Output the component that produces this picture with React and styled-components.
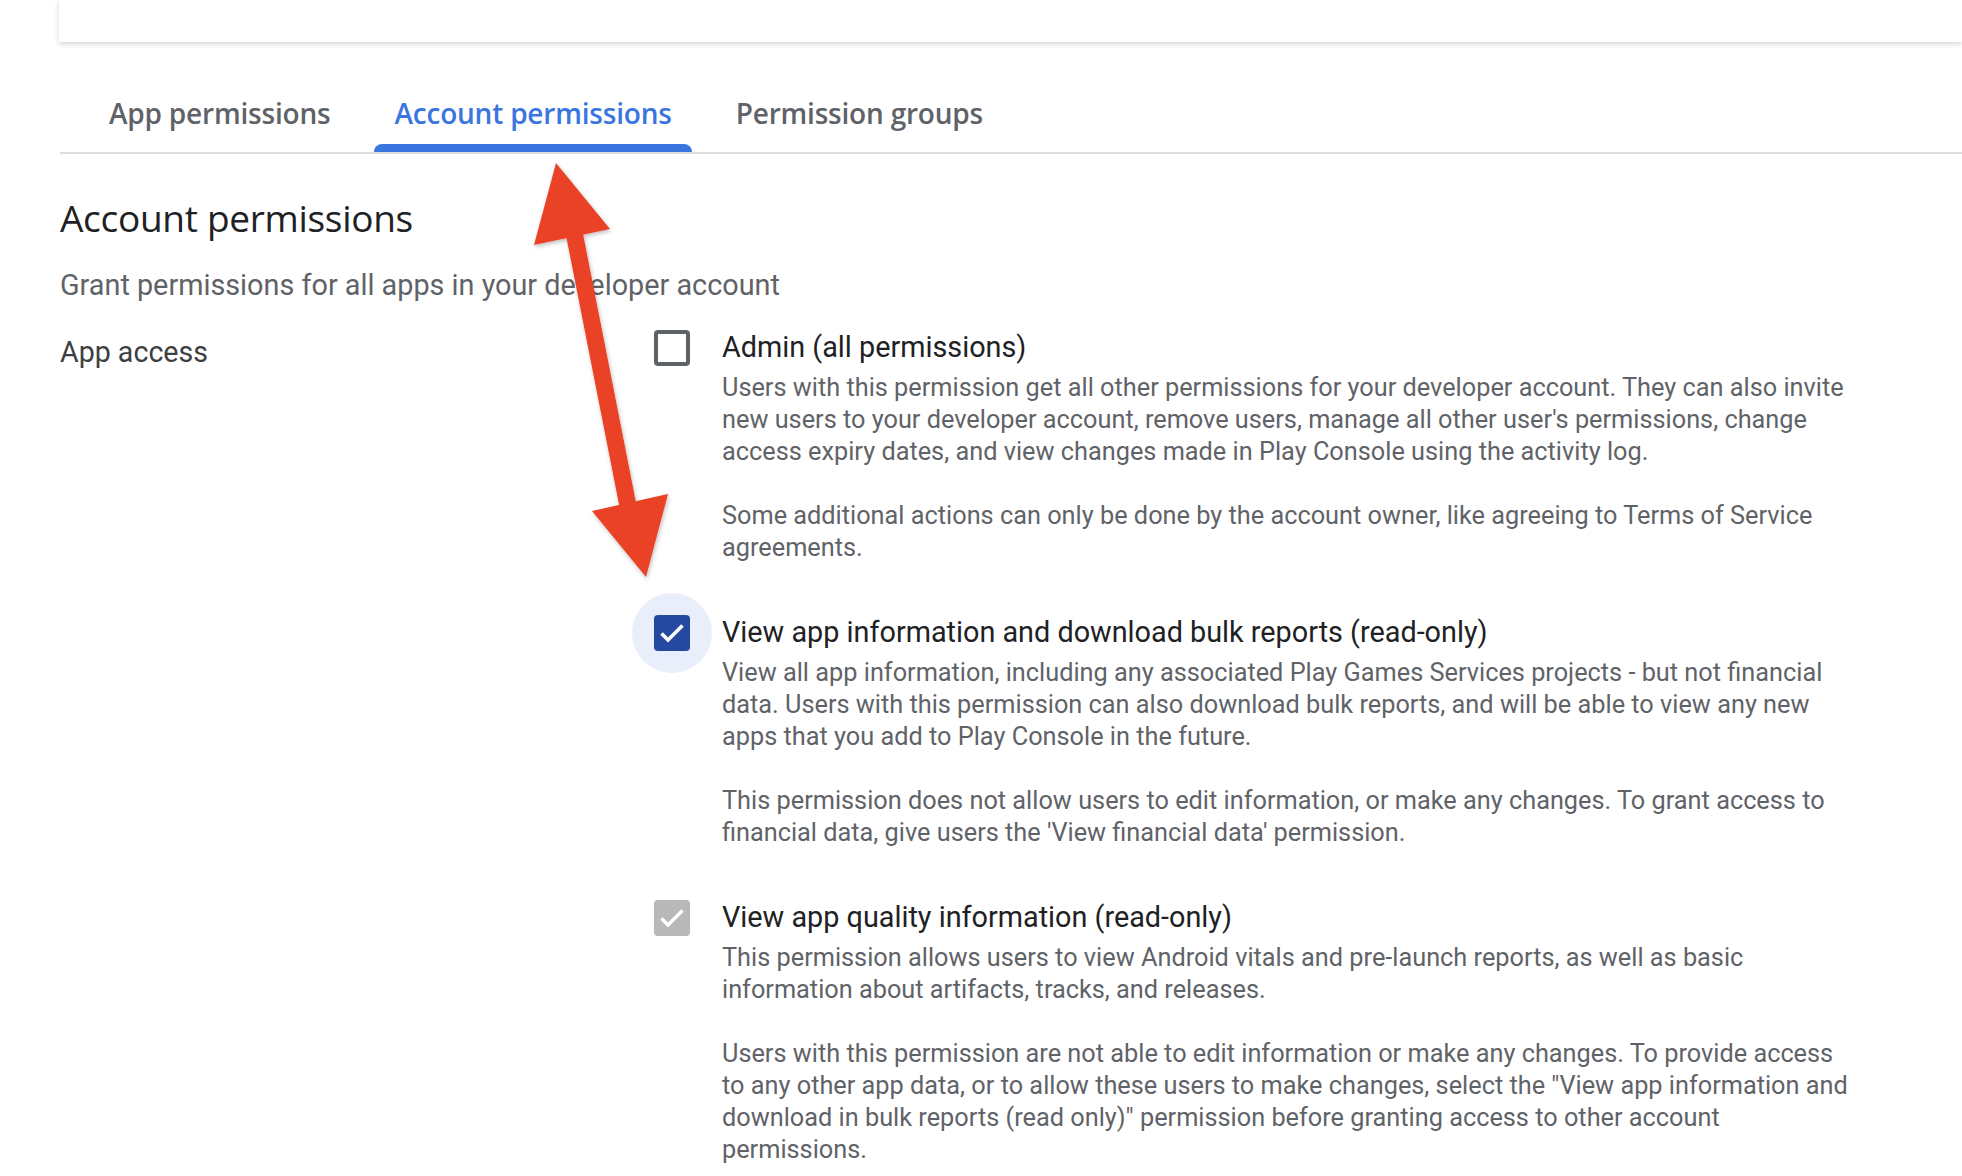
import styled, { createGlobalStyle } from 'styled-components';

const GlobalStyle = createGlobalStyle`
    html, body {
        margin: 0;
        padding: 0;
        background: #fff;
        overflow: hidden;
    }
    body {
        font-family: Roboto, 'Noto Sans', sans-serif;
        -webkit-font-smoothing: antialiased;
    }
`;

const Page = styled.div`
    position: relative;
    width: 1962px;
    height: 1176px;
    overflow: hidden;
`;

const TopBar = styled.div`
    height: 42px;
    margin-left: 59px;
    background: #fff;
    box-shadow: 0 2px 5px rgba(60, 64, 67, 0.22);
`;

const Main = styled.main`
    padding-left: 60px;
`;

const TabBar = styled.nav`
    display: flex;
    gap: 24px;
    margin-top: 40px;
    padding-left: 29px;
    border-bottom: 2px solid #dadce0;
`;

const Tab = styled.div`
    position: relative;
    height: 70px;
    padding: 0 20px 8px;
    box-sizing: border-box;
    display: flex;
    align-items: center;
    font-family: 'Open Sans', Lato, sans-serif;
    font-size: 28px;
    font-weight: 600;
    letter-spacing: -0.2px;
    color: ${p => (p.$active ? '#3a75e0' : '#5f6368')};

    &::after {
        content: '';
        display: ${p => (p.$active ? 'block' : 'none')};
        position: absolute;
        left: 0;
        right: 0;
        bottom: 0;
        height: 8px;
        border-radius: 8px 8px 0 0;
        background: #3a75e0;
    }
`;

const Heading = styled.h1`
    margin: 40px 0 0;
    font-family: 'Open Sans', Lato, sans-serif;
    font-size: 37px;
    line-height: 48px;
    font-weight: 500;
    letter-spacing: -0.3px;
    color: #202124;
`;

const Subtitle = styled.p`
    margin: 25px 0 0;
    font-size: 28.8px;
    line-height: 36px;
    color: #5f6368;
`;

const AccessRow = styled.section`
    display: grid;
    grid-template-columns: 594px 1202px;
    margin-top: 22px;
`;

const RowLabel = styled.div`
    padding-top: 5px;
    font-size: 28.6px;
    line-height: 44px;
    color: #3c4043;
`;

const OptionList = styled.div`
    display: flex;
    flex-direction: column;
    gap: 46px;
`;

const Option = styled.div`
    display: flex;
    gap: 32px;
`;

const BoxSlot = styled.div`
    position: relative;
    flex: 0 0 36px;
    height: 44px;
    padding-top: 5px;
    box-sizing: border-box;
`;

const Halo = styled.span`
    position: absolute;
    left: -22px;
    top: -17px;
    width: 80px;
    height: 80px;
    border-radius: 50%;
    background: #e8eefa;
`;

const Box = styled.span`
    position: relative;
    display: flex;
    align-items: center;
    justify-content: center;
    width: 36px;
    height: 36px;
    box-sizing: border-box;
    border-radius: 4px;
    border: ${p => (p.$state === 'off' ? '4px solid #5f6368' : 'none')};
    background: ${p =>
        p.$state === 'on' ? '#2549a0' : p.$state === 'disabled' ? '#b8b8b9' : 'transparent'};
`;

const OptionText = styled.div`
    flex: 1;
`;

const OptionTitle = styled.div`
    font-size: 28.8px;
    line-height: 44px;
    color: #202124;
`;

const Desc = styled.p`
    margin: 3px 0 0;
    font-size: 25.3px;
    line-height: 32px;
    color: #5f6368;

    & + & {
        margin-top: 32px;
    }
`;

const Annotation = styled.svg`
    position: absolute;
    left: 0;
    top: 0;
    pointer-events: none;
`;

const Check = () => (
    <svg width="36" height="36" viewBox="0 0 36 36">
        <path d="M7.5 18.5l6.5 6.5L28.5 10.5" fill="none" stroke="#fff" strokeWidth="3.6" />
    </svg>
);

const CheckBox = ({ state }) => (
    <BoxSlot>
        {state === 'on' && <Halo />}
        <Box $state={state}>{state !== 'off' && <Check />}</Box>
    </BoxSlot>
);

const options = [
    {
        state: 'off',
        title: 'Admin (all permissions)',
        text: [
            "Users with this permission get all other permissions for your developer account. They can also invite new users to your developer account, remove users, manage all other user's permissions, change access expiry dates, and view changes made in Play Console using the activity log.",
            'Some additional actions can only be done by the account owner, like agreeing to Terms of Service agreements.',
        ],
    },
    {
        state: 'on',
        title: 'View app information and download bulk reports (read-only)',
        text: [
            'View all app information, including any associated Play Games Services projects - but not financial data. Users with this permission can also download bulk reports, and will be able to view any new apps that you add to Play Console in the future.',
            "This permission does not allow users to edit information, or make any changes. To grant access to financial data, give users the 'View financial data' permission.",
        ],
    },
    {
        state: 'disabled',
        title: 'View app quality information (read-only)',
        text: [
            'This permission allows users to view Android vitals and pre-launch reports, as well as basic information about artifacts, tracks, and releases.',
            'Users with this permission are not able to edit information or make any changes. To provide access to any other app data, or to allow these users to make changes, select the "View app information and download in bulk reports (read only)" permission before granting access to other account permissions.',
        ],
    },
];

const tabs = ['App permissions', 'Account permissions', 'Permission groups'];

export default function App() {
    return (
        <Page>
            <GlobalStyle />
            <TopBar />
            <Main>
                <TabBar>
                    {tabs.map(t => (
                        <Tab key={t} $active={t === 'Account permissions'}>{t}</Tab>
                    ))}
                </TabBar>
                <Heading>Account permissions</Heading>
                <Subtitle>Grant permissions for all apps in your developer account</Subtitle>
                <AccessRow>
                    <RowLabel>App access</RowLabel>
                    <OptionList>
                        {options.map(o => (
                            <Option key={o.title}>
                                <CheckBox state={o.state} />
                                <OptionText>
                                    <OptionTitle>{o.title}</OptionTitle>
                                    {o.text.map((p, i) => (
                                        <Desc key={i}>{p}</Desc>
                                    ))}
                                </OptionText>
                            </Option>
                        ))}
                    </OptionList>
                </AccessRow>
            </Main>
            <Annotation width="1962" height="1176" viewBox="0 0 1962 1176">
                <defs>
                    <filter id="arrowShadow" x="-20%" y="-20%" width="140%" height="140%">
                        <feDropShadow dx="1" dy="2" stdDeviation="2" floodColor="#000" floodOpacity="0.25" />
                    </filter>
                </defs>
                <g fill="#e94326" filter="url(#arrowShadow)">
                    <line x1="574" y1="232" x2="628" y2="506" stroke="#e94326" strokeWidth="17" />
                    <polygon points="556,163 534,245 610,229" />
                    <polygon points="646,577 592,511 668,494" />
                </g>
            </Annotation>
        </Page>
    );
}
